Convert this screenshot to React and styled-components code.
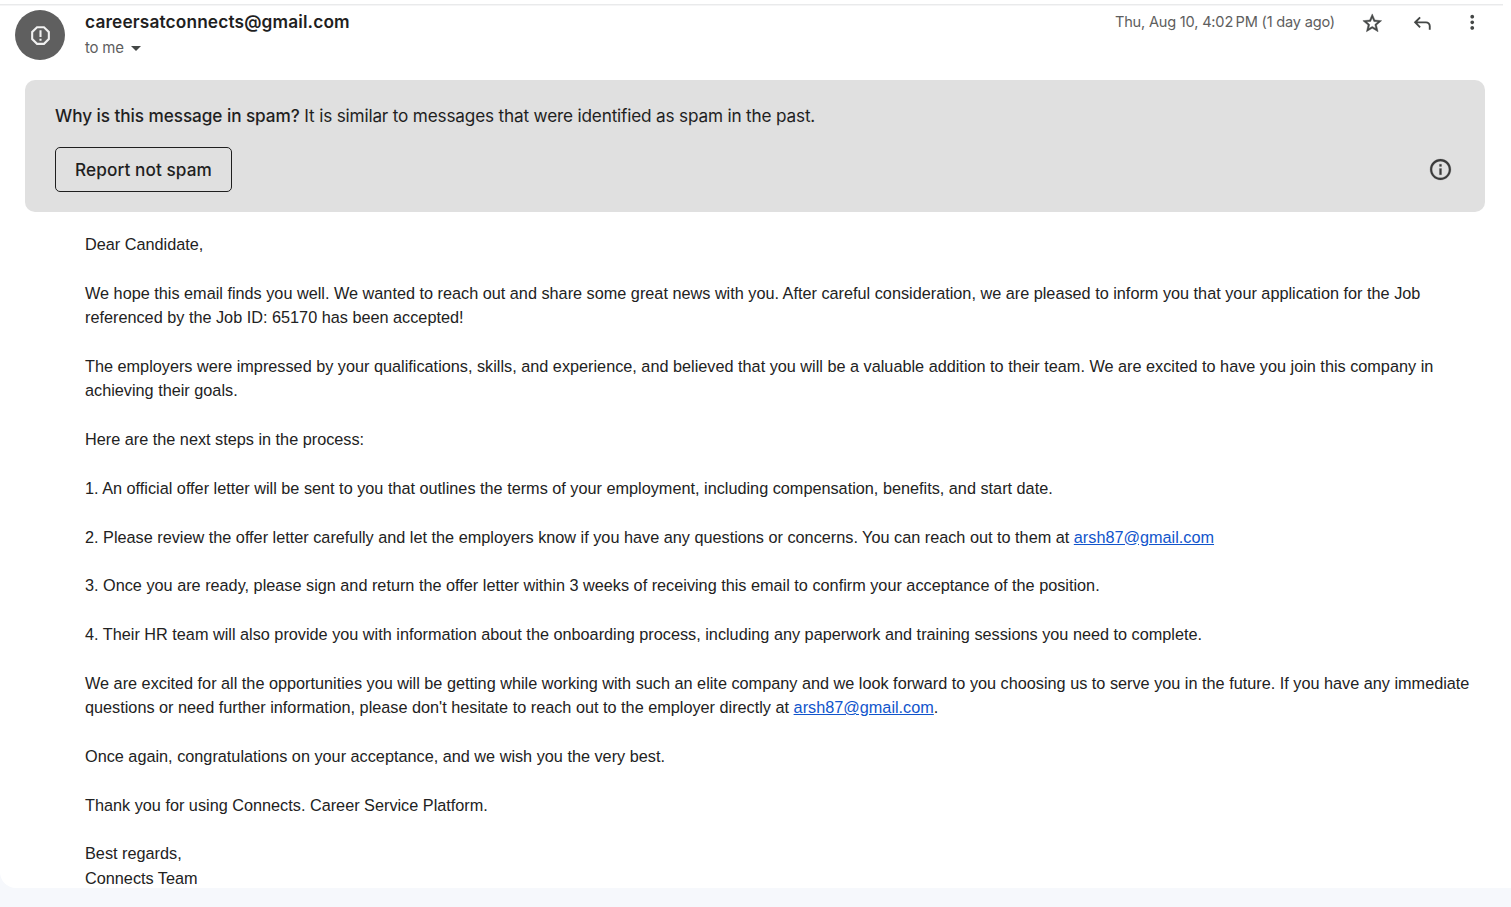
import React from "react";
import styled, { createGlobalStyle } from "styled-components";

const uiFont = `Inter, Roboto, sans-serif`;

const GlobalStyle = createGlobalStyle`
  *, *::before, *::after { box-sizing: border-box; }
  body { margin: 0; background: #f6f8fc; }
`;

const Page = styled.main`
  height: 907px;
  overflow: hidden;
  background: #f6f8fc;
`;

const Message = styled.article`
  height: 888px;
  padding-top: 4px;
  background: #fff;
  border-bottom-left-radius: 16px;
`;

const Divider = styled.div`
  width: 1503px;
  height: 1px;
  background: #e9eaeb;
  box-shadow: 0 1px 0 #f5f5f6;
`;

const Header = styled.header`
  display: flex;
  height: 75px;
  padding: 5px 27.5px 0 15px;
`;

const Avatar = styled.div`
  display: grid;
  place-items: center;
  width: 50px;
  height: 50px;
  border-radius: 50%;
  background: #5f5f5f;
`;

const Sender = styled.div`
  flex: 1;
  margin-left: 20px;
  font-family: ${uiFont};
`;

const Address = styled.h3`
  margin: 0;
  font-size: 17.3px;
  line-height: 24px;
  font-weight: 600;
  letter-spacing: 0.14px;
  color: #1f1f1f;
`;

const Recipient = styled.div`
  display: flex;
  align-items: center;
  gap: 7.5px;
  margin-top: 3.5px;
  font-size: 15px;
  line-height: 20px;
  letter-spacing: -0.2px;
  color: #5e5e5e;
`;

const Caret = styled.span`
  border: 5px solid transparent;
  border-top-color: #444746;
  border-bottom: 0;
  margin-top: 1px;
`;

const Stamp = styled.time`
  margin-right: 26px;
  font: 14.6px/24px ${uiFont};
  letter-spacing: -0.2px;
  white-space: pre;
  color: #5e5e5e;
`;

const Actions = styled.div`
  display: flex;
  gap: 27.5px;
  padding-top: 2.4px;
`;

const Glyph = styled.svg`
  display: block;
  width: ${(p) => p.$size}px;
  height: ${(p) => p.$size}px;
  fill: ${(p) => p.$color || "#444746"};
  stroke: ${(p) => p.$color || "#444746"};
  stroke-width: ${(p) => p.$weight || 0};
`;

const Banner = styled.section`
  height: 132px;
  margin: 0 26px 0 25px;
  padding: 24px 32px 20px 30px;
  border-radius: 10px;
  background: #e0e0e0;
  color: #1f1f1f;
  font-family: ${uiFont};
`;

const Reason = styled.p`
  margin: 0;
  font-size: 17.2px;
  line-height: 24px;
  letter-spacing: -0.18px;
  white-space: nowrap;
`;

const Question = styled.strong`
  font-weight: 500;
  letter-spacing: -0.07px;
`;

const BannerRow = styled.div`
  display: flex;
  align-items: center;
  justify-content: space-between;
  margin-top: 19px;
`;

const ReportButton = styled.button`
  width: 177px;
  height: 45px;
  padding: 0;
  border: 1px solid #1f1f1f;
  border-radius: 5px;
  background: transparent;
  color: #1f1f1f;
  font: 500 17.2px ${uiFont};
  letter-spacing: 0.08px;
`;

const Body = styled.div`
  width: 1391px;
  margin: 20px 0 0 85px;
  font: 16.25px/24.375px "Liberation Sans", Arial, sans-serif;
  color: #222;
`;

const Paragraph = styled.p`
  margin: 0 0 24.375px;
`;

const MailLink = styled.a`
  color: #1155cc;
  text-decoration: underline;
`;

const Mail = () => <MailLink href="mailto:arsh87@gmail.com">arsh87@gmail.com</MailLink>;

export default function App() {
  return (
    <Page>
      <GlobalStyle />
      <Message>
        <Divider />
        <Header>
          <Avatar>
            <Glyph $size={25} $color="#f1f1f1" viewBox="0 0 24 24">
              <path d="M15.73 3H8.27L3 8.27v7.46L8.27 21h7.46L21 15.73V8.27L15.73 3zM19 14.9L14.9 19H9.1L5 14.9V9.1L9.1 5h5.8L19 9.1v5.8z" />
              <path d="M11 7h2v6.5h-2zM11 15h2v2h-2z" />
            </Glyph>
          </Avatar>
          <Sender>
            <Address>careersatconnects@gmail.com</Address>
            <Recipient>
              to me
              <Caret />
            </Recipient>
          </Sender>
          <Stamp>Thu, Aug 10, 4:02{"\u202f"}PM (1 day ago)</Stamp>
          <Actions>
            <Glyph $size={22.5} $weight={0.5} viewBox="0 0 24 24">
              <path d="M22 9.24l-7.19-.62L12 2 9.19 8.63 2 9.24l5.46 4.73L5.82 21 12 17.27 18.18 21l-1.63-7.03L22 9.24zM12 15.4l-3.76 2.27 1-4.28-3.32-2.88 4.38-.38L12 6.1l1.71 4.04 4.38.38-3.32 2.88 1 4.28L12 15.4z" />
            </Glyph>
            <Glyph $size={22.5} viewBox="0 -960 960 960">
              <path d="M760-200v-160q0-50-35-85t-85-35H273l144 144-57 56-240-240 240-240 57 56-144 144h367q83 0 141.5 58.5T840-360v160h-80Z" />
            </Glyph>
            <Glyph $size={22.5} viewBox="0 1 24 24">
              <path d="M12 8c1.1 0 2-.9 2-2s-.9-2-2-2-2 .9-2 2 .9 2 2 2zm0 2c-1.1 0-2 .9-2 2s.9 2 2 2 2-.9 2-2-.9-2-2-2zm0 6c-1.1 0-2 .9-2 2s.9 2 2 2 2-.9 2-2-.9-2-2-2z" />
            </Glyph>
          </Actions>
        </Header>
        <Banner>
          <Reason>
            <Question>Why is this message in spam?</Question> It is similar to messages that were identified as spam in the past.
          </Reason>
          <BannerRow>
            <ReportButton>Report not spam</ReportButton>
            <Glyph $size={25} $color="#3a3a3a" $weight={0.2} viewBox="0 0 24 24">
              <path d="M11 7h2v2h-2zm0 4h2v6h-2zm1-9C6.48 2 2 6.48 2 12s4.48 10 10 10 10-4.48 10-10S17.52 2 12 2zm0 18c-4.41 0-8-3.59-8-8s3.59-8 8-8 8 3.59 8 8-3.59 8-8 8z" />
            </Glyph>
          </BannerRow>
        </Banner>
        <Body>
          <Paragraph>Dear Candidate,</Paragraph>
          <Paragraph>
            We hope this email finds you well. We wanted to reach out and share some great news with you. After careful
            consideration, we are pleased to inform you that your application for the Job referenced by the Job ID: 65170
            has been accepted!
          </Paragraph>
          <Paragraph>
            The employers were impressed by your qualifications, skills, and experience, and believed that you will be a
            valuable addition to their team. We are excited to have you join this company in achieving their goals.
          </Paragraph>
          <Paragraph>Here are the next steps in the process:</Paragraph>
          <Paragraph>
            1. An official offer letter will be sent to you that outlines the terms of your employment, including
            compensation, benefits, and start date.
          </Paragraph>
          <Paragraph>
            2. Please review the offer letter carefully and let the employers know if you have any questions or concerns.
            You can reach out to them at <Mail />
          </Paragraph>
          <Paragraph>
            3. Once you are ready, please sign and return the offer letter within 3 weeks of receiving this email to
            confirm your acceptance of the position.
          </Paragraph>
          <Paragraph>
            4. Their HR team will also provide you with information about the onboarding process, including any paperwork
            and training sessions you need to complete.
          </Paragraph>
          <Paragraph>
            We are excited for all the opportunities you will be getting while working with such an elite company and we
            look forward to you choosing us to serve you in the future. If you have any immediate questions or need
            further information, please don't hesitate to reach out to the employer directly at <Mail />.
          </Paragraph>
          <Paragraph>
            Once again, congratulations on your acceptance, and we wish you the very best.
          </Paragraph>
          <Paragraph>Thank you for using Connects. Career Service Platform.</Paragraph>
          <Paragraph>
            Best regards,
            <br />
            Connects Team
          </Paragraph>
        </Body>
      </Message>
    </Page>
  );
}
